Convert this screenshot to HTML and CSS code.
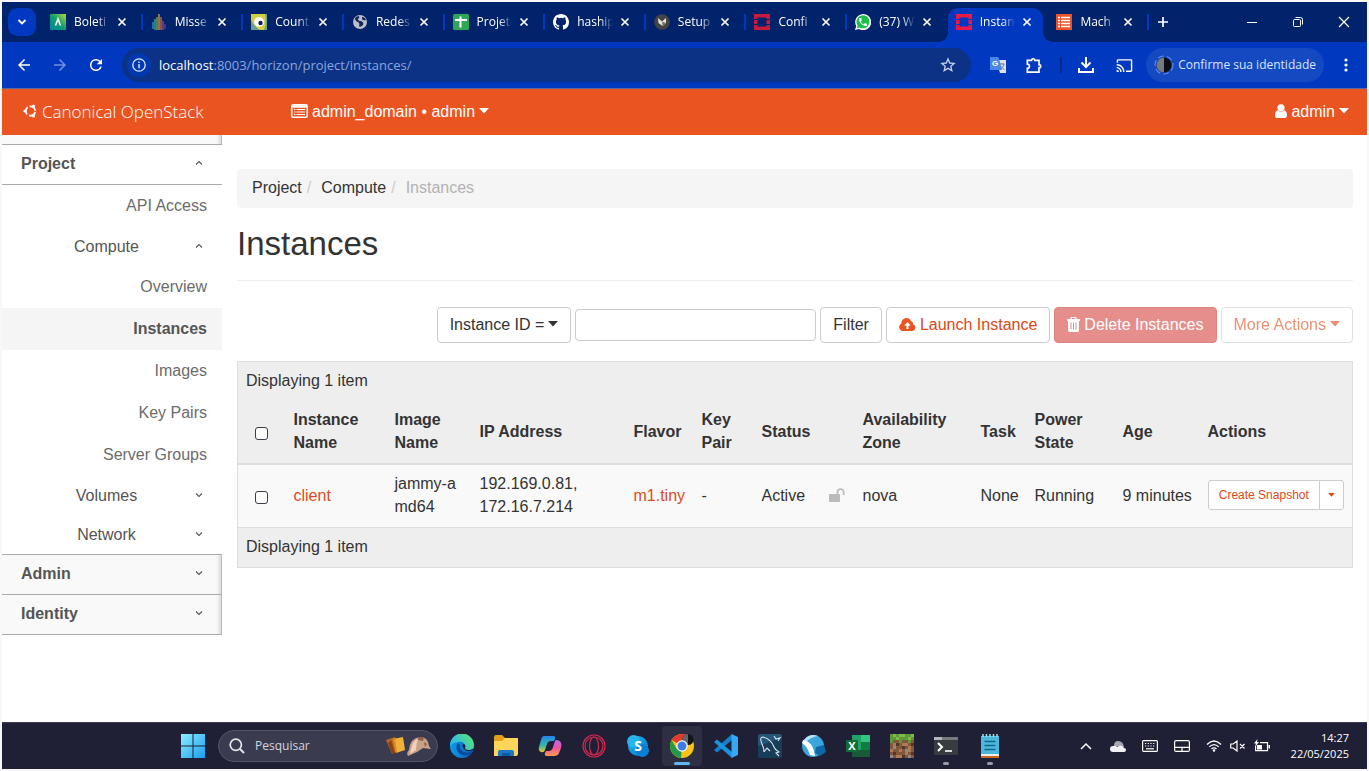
FILE: index.html
```html
<!DOCTYPE html>
<html lang="pt-BR">
<head>
<meta charset="utf-8">
<meta name="viewport" content="width=device-width, initial-scale=1">
<title>Instances - Canonical OpenStack</title>
<link rel="stylesheet" href="styles.css">
</head>
<body>
<svg class="defs" aria-hidden="true">
  <defs>
    <symbol id="x" viewBox="0 0 10 10"><path d="M1.500 1.500l7 7M8.500 1.500l-7 7" fill="none" stroke="#fff" stroke-width="1.700"/></symbol>
    <symbol id="openstack" viewBox="0 0 16 16"><path fill="currentColor" d="M0 0h16v5h-3.500V3.500h-9V5H0zM0 6h3.500v4H0zM12.500 6H16v4h-3.500zM0 11h3.500v1.500h9V11H16v5H0z"/></symbol>
    <symbol id="up" viewBox="0 0 8 6"><path d="M1 4.500L4 1.500l3 3" fill="none" stroke="#555" stroke-width="1.100"/></symbol>
    <symbol id="down" viewBox="0 0 8 6"><path d="M1 1.500l3 3 3-3" fill="none" stroke="#555" stroke-width="1.100"/></symbol>
    <symbol id="caret" viewBox="0 0 10 6"><path d="M0 0h10L5 5.500z" fill="currentColor"/></symbol>
    <linearGradient id="gw" x2="1" y2="1"><stop offset="0" stop-color="#8cefff"/><stop offset="1" stop-color="#189cf0"/></linearGradient>
    <linearGradient id="gb" x2="1"><stop offset="0" stop-color="#0e9ae8"/><stop offset="1" stop-color="#0b5cc0"/></linearGradient>
    <linearGradient id="ge" x2="1" y1="0.500"><stop offset="0" stop-color="#2ab6f0"/><stop offset="1" stop-color="#5fe86a"/></linearGradient>
    <linearGradient id="gc1" x2="0" y2="1"><stop offset="0" stop-color="#2286ee"/><stop offset="0.600" stop-color="#35b9a0"/><stop offset="1" stop-color="#f2c62b"/></linearGradient>
    <linearGradient id="gc2" x2="0" y2="1"><stop offset="0" stop-color="#b46af0"/><stop offset="0.500" stop-color="#f0559c"/><stop offset="1" stop-color="#ff9b55"/></linearGradient>
    <linearGradient id="gs" x2="1" y2="1"><stop offset="0" stop-color="#29b6ee"/><stop offset="1" stop-color="#0078cc"/></linearGradient>
    <linearGradient id="gt" x2="1" y2="1"><stop offset="0" stop-color="#0a7fa0"/><stop offset="0.500" stop-color="#0d9f6e"/><stop offset="1" stop-color="#b8d532"/></linearGradient>
  </defs>
</svg>
<div class="screen">
  <div class="tabstrip">
    <button class="tab-search" aria-label="Pesquisar guias"><svg width="10" height="8" viewBox="0 0 10 8"><path d="M1.500 2l3.500 3.500L8.500 2" fill="none" stroke="#fff" stroke-width="1.800"/></svg></button>
    <ul class="tabs">
      <li class="tab"><div class="face"><svg class="fav" viewBox="0 0 16 16"><path fill="url(#gt)" transform="matrix(1 0 0 -1 0 16)" d="M0 0h16v16H0z"/><path d="M5.500 11.500L8 5l2.500 6.500" fill="none" stroke="#fff" stroke-width="1.600"/></svg><span class="title">Boleti</span><button class="close" aria-label="Fechar"><svg><use href="#x"/></svg></button></div><i class="sep"></i></li>
      <li class="tab"><div class="face"><svg class="fav" viewBox="0 0 16 16"><g stroke-width="1.200"><path d="M2 8v7" stroke="#35a6dd"/><path d="M4 5v11" stroke="#3cbf9f"/><path d="M6 3v13" stroke="#8abb50"/><path d="M8 0v16" stroke="#e6b02e"/><path d="M10 3v13" stroke="#e8713c"/><path d="M12 7v9" stroke="#a24b7d"/><path d="M14 10v5" stroke="#6549a0"/></g></svg><span class="title">Misse</span><button class="close" aria-label="Fechar"><svg><use href="#x"/></svg></button></div><i class="sep"></i></li>
      <li class="tab"><div class="face"><svg class="fav" viewBox="0 0 16 16"><path fill="#d3cf3c" d="M0 0h16v16H0z"/><path fill="#6aa09a" d="M0 6q3 6 9 10H0zM14 0h2v16h-3q3-8 1-16z"/><circle cx="8" cy="8" r="5" fill="#fff"/><circle cx="9.500" cy="9" r="2.200" fill="#10206a"/></svg><span class="title">Count</span><button class="close" aria-label="Fechar"><svg><use href="#x"/></svg></button></div><i class="sep"></i></li>
      <li class="tab"><div class="face"><svg class="fav" viewBox="0 0 16 16"><circle cx="8" cy="8" r="7" fill="#b9bec9"/><path fill="#15265b" d="M3 4q2-2 4-2 1 2-1 3 0 2 3 2 3 1 2 4-3 3-4 1 1-3-1-4-3-1-3-4zM10 3q3 0 4 3-3 1-4-1z"/></svg><span class="title">Redes</span><button class="close" aria-label="Fechar"><svg><use href="#x"/></svg></button></div><i class="sep"></i></li>
      <li class="tab"><div class="face"><svg class="fav" viewBox="0 0 16 16"><rect width="16" height="16" rx="1.500" fill="#2fa656"/><path d="M2 6h12M7.500 2.500v11" stroke="#fff" stroke-width="2"/></svg><span class="title">Projet</span><button class="close" aria-label="Fechar"><svg><use href="#x"/></svg></button></div><i class="sep"></i></li>
      <li class="tab"><div class="face"><svg class="fav" viewBox="0 0 16 16"><path fill="#fff" d="M8 0C3.580 0 0 3.580 0 8c0 3.540 2.290 6.530 5.470 7.590.4.070.55-.17.55-.38 0-.19-.01-.82-.01-1.490-2.010.37-2.530-.49-2.690-.94-.09-.23-.48-.94-.82-1.130-.28-.15-.68-.52-.01-.53.63-.01 1.080.58 1.230.82.72 1.210 1.870.87 2.330.66.07-.52.28-.87.51-1.070-1.780-.2-3.640-.89-3.640-3.950 0-.87.31-1.590.82-2.150-.08-.2-.36-1.020.08-2.120 0 0 .67-.21 2.200.82a7.600 7.600 0 0 1 4 0c1.530-1.040 2.200-.82 2.200-.82.44 1.100.16 1.920.08 2.120.51.56.82 1.270.82 2.150 0 3.070-1.870 3.750-3.650 3.950.29.25.54.73.54 1.480 0 1.070-.01 1.930-.01 2.200 0 .21.15.46.55.38A8 8 0 0 0 16 8c0-4.420-3.580-8-8-8z"/></svg><span class="title">haship</span><button class="close" aria-label="Fechar"><svg><use href="#x"/></svg></button></div><i class="sep"></i></li>
      <li class="tab"><div class="face"><svg class="fav" viewBox="0 0 16 16"><circle cx="8" cy="8" r="7.800" fill="#444447"/><path fill="#e8e4dc" d="M4 4l4 3.500L12 4v5l-3.500 3L4.500 9z"/><path fill="#77726a" d="M8 7.500L12 9l-3.500 3z"/></svg><span class="title">Setup</span><button class="close" aria-label="Fechar"><svg><use href="#x"/></svg></button></div><i class="sep"></i></li>
      <li class="tab"><div class="face"><svg class="fav os-dim"><use href="#openstack"/></svg><span class="title">Confi</span><button class="close" aria-label="Fechar"><svg><use href="#x"/></svg></button></div><i class="sep"></i></li>
      <li class="tab"><div class="face"><svg class="fav" viewBox="0 0 24 24"><path fill="#fff" d="M0 24l1.800-6A12 12 0 1 1 6 22.400z"/><path fill="#1fbf4c" d="M2.600 21.400l1.200-4.200A9.800 9.800 0 1 1 7 20.200z"/><path fill="#fff" transform="translate(4 4) scale(.67)" d="M6.620 10.790c1.440 2.830 3.760 5.140 6.590 6.590l2.200-2.200c.27-.27.67-.36 1.020-.24 1.120.37 2.330.57 3.570.57.55 0 1 .45 1 1V20c0 .55-.45 1-1 1-9.390 0-17-7.610-17-17 0-.55.45-1 1-1h3.500c.55 0 1 .45 1 1 0 1.250.2 2.450.57 3.570.11.35.03.74-.25 1.020z"/></svg><span class="title">(37) W</span><button class="close" aria-label="Fechar"><svg><use href="#x"/></svg></button></div><i class="sep none"></i></li>
      <li class="tab active"><div class="face"><svg class="fav os"><use href="#openstack"/></svg><span class="title">Instan</span><button class="close" aria-label="Fechar"><svg><use href="#x"/></svg></button></div><i class="sep none"></i></li>
      <li class="tab"><div class="face"><svg class="fav" viewBox="0 0 16 16"><path fill="#e9542a" d="M0 0h16v16H0z"/><path d="M2 3.500h2m1 0h9M2 6.500h2m1 0h9M2 9.500h2m1 0h9M2 12.500h2m1 0h9" stroke="#fff" stroke-width="1.300"/></svg><span class="title">Mach</span><button class="close" aria-label="Fechar"><svg><use href="#x"/></svg></button></div><i class="sep"></i></li>
    </ul>
    <button class="new-tab" aria-label="Nova guia"><svg width="12" height="12" viewBox="0 0 12 12"><path d="M6 1v10M1 6h10" stroke="#fff" stroke-width="1.700"/></svg></button>
    <div class="win-controls">
      <button aria-label="Minimizar"><svg width="12" height="12" viewBox="0 0 12 12"><path d="M1 6.500h10" stroke="#fff"/></svg></button>
      <button aria-label="Restaurar"><svg width="12" height="12" viewBox="0 0 12 12" fill="none" stroke="#fff"><rect x="1.500" y="3.500" width="7" height="7" rx="1"/><path d="M3.500 1.500h5q2 0 2 2v5"/></svg></button>
      <button aria-label="Fechar janela"><svg width="12" height="12" viewBox="0 0 12 12"><path d="M1 1l10 10M11 1L1 11" stroke="#fff" stroke-width="1.200"/></svg></button>
    </div>
  </div>

  <div class="toolbar">
    <button class="tool" aria-label="Voltar"><svg width="18" height="18" viewBox="0 0 24 24"><path fill="#fff" d="M20 11H7.830l5.590-5.590L12 4l-8 8 8 8 1.410-1.410L7.830 13H20z"/></svg></button>
    <button class="tool" aria-label="Avançar"><svg width="18" height="18" viewBox="0 0 24 24"><path fill="#6f93e3" d="M4 11h12.170l-5.590-5.590L12 4l8 8-8 8-1.410-1.410L16.170 13H4z"/></svg></button>
    <button class="tool" aria-label="Recarregar"><svg width="18" height="18" viewBox="0 0 24 24"><path fill="#fff" d="M17.650 6.350A7.960 7.960 0 0 0 12 4a8 8 0 1 0 7.730 10h-2.080A6 6 0 1 1 12 6c1.660 0 3.140.69 4.220 1.780L13 11h7V4z"/></svg></button>
    <div class="omnibox">
      <button class="site-info" aria-label="Informações do site"><svg width="14" height="14" viewBox="0 0 14 14"><circle cx="7" cy="7" r="6.200" fill="none" stroke="#dfe8ff" stroke-width="1.300"/><path d="M7 6v4.200M7 3.600v1.500" stroke="#dfe8ff" stroke-width="1.400"/></svg></button>
      <div class="url"><b>localhost</b>:8003/horizon/project/instances/</div>
      <button class="star" aria-label="Favoritos"><svg width="16" height="16" viewBox="0 0 24 24"><path d="M12 3l2.600 6 6.600.600-5 4.400 1.500 6.500L12 17l-5.700 3.500L7.800 14l-5-4.400 6.600-.600z" fill="none" stroke="#c3d0ee" stroke-width="2"/></svg></button>
    </div>
    <div class="extensions">
      <button class="tool" aria-label="Traduzir"><svg width="16" height="16" viewBox="0 0 16 16"><path fill="#dfe1e6" d="M6 3h10v13H10z"/><path d="M9.500 7h5M12 6v1M14 7q-1 4-3.500 5.500M10.500 9l4 4" fill="none" stroke="#72819b"/><path fill="#4a86e8" d="M0 0h8.500L12 13H0z"/><text x="2" y="9" class="g-letter">G</text></svg></button>
      <button class="tool" aria-label="Extensões"><svg width="20" height="20" viewBox="0 0 24 24"><path d="M4 6.500h5a2 2 0 0 1 4 0h5v5a2 2 0 0 1 0 4v5H4v-4.500a2.500 2.500 0 0 0 0-5z" fill="none" stroke="#fff" stroke-width="2"/></svg></button>
      <i class="tool-sep"></i>
      <button class="tool wide" aria-label="Downloads"><svg width="18" height="18" viewBox="0 0 18 18"><path d="M9 1v9M4.500 6.500L9 11l4.500-4.500M2 12v4h14v-4" fill="none" stroke="#fff" stroke-width="2"/></svg></button>
      <button class="tool" aria-label="Transmitir"><svg width="17" height="17" viewBox="0 0 24 24"><path fill="#fff" d="M21 3H3c-1.100 0-2 .9-2 2v3h2V5h18v14h-7v2h7c1.100 0 2-.9 2-2V5c0-1.100-.9-2-2-2zM1 18v3h3c0-1.660-1.340-3-3-3zm0-4v2c2.760 0 5 2.240 5 5h2c0-3.870-3.130-7-7-7zm0-4v2c4.970 0 9 4.030 9 9h2c0-6.080-4.930-11-11-11z"/></svg></button>
    </div>
    <button class="profile"><svg width="20" height="20" viewBox="0 0 20 20"><circle cx="10" cy="10" r="9" fill="none" stroke="#5b8af0" stroke-width="1.200" stroke-dasharray="6 3"/><circle cx="10" cy="10" r="7.500" fill="#0b0d12"/><path fill="#77797c" d="M10 2.500v15a7.500 7.500 0 0 1 0-15z"/></svg>Confirme sua identidade</button>
    <button class="menu-dots" aria-label="Menu"><svg width="4" height="16" viewBox="0 0 4 16" fill="#fff"><circle cx="2" cy="3" r="1.600"/><circle cx="2" cy="8" r="1.600"/><circle cx="2" cy="13" r="1.600"/></svg></button>
  </div>

  <header class="topbar">
    <a class="brand" href="#"><svg width="14" height="14" viewBox="0 0 14 14"><circle cx="7.500" cy="7" r="4.700" fill="none" stroke="#fff" stroke-width="1.800" stroke-dasharray="7.840 2" stroke-dashoffset="8.840"/><circle cx="1.900" cy="7" r="1.500" fill="#fff"/><circle cx="10.500" cy="1.900" r="1.500" fill="#fff"/><circle cx="10.500" cy="12.100" r="1.500" fill="#fff"/></svg>Canonical OpenStack</a>
    <button class="nav-btn"><svg width="17" height="14" viewBox="0 0 17 14"><rect x=".75" y=".75" width="15.500" height="12.500" rx="1.500" fill="none" stroke="#fff" stroke-width="1.500"/><path d="M1 2.500h15" stroke="#fff" stroke-width="2.500"/><path d="M3 5.500h1.500m1 0H14M3 8h1.500m1 0H14M3 10.500h1.500m1 0H14" stroke="#fff" stroke-width="1.200"/></svg>admin_domain • admin<svg class="caret"><use href="#caret"/></svg></button>
    <button class="nav-btn user"><svg width="12" height="14" viewBox="0 0 12 14"><circle cx="6" cy="3.800" r="3.600" fill="#fff"/><path fill="#fff" d="M2.600 6.200Q6 9.500 9.400 6.200 12 7 12 11.500 12 14 9.800 14H2.200Q0 14 0 11.500 0 7 2.600 6.200z"/></svg>admin<svg class="caret"><use href="#caret"/></svg></button>
  </header>

  <div class="page">
    <nav class="sidebar">
      <div class="stub"></div>
      <button class="panel open">Project<svg class="chev"><use href="#up"/></svg></button>
      <a class="leaf" href="#">API Access</a>
      <button class="group"><span>Compute</span><svg class="chev"><use href="#up"/></svg></button>
      <a class="leaf" href="#">Overview</a>
      <a class="leaf current" href="#">Instances</a>
      <a class="leaf" href="#">Images</a>
      <a class="leaf" href="#">Key Pairs</a>
      <a class="leaf" href="#">Server Groups</a>
      <button class="group"><span>Volumes</span><svg class="chev"><use href="#down"/></svg></button>
      <button class="group"><span>Network</span><svg class="chev"><use href="#down"/></svg></button>
      <button class="panel first">Admin<svg class="chev"><use href="#down"/></svg></button>
      <button class="panel">Identity<svg class="chev"><use href="#down"/></svg></button>
    </nav>
    <main>
      <ol class="breadcrumb"><li><a href="#">Project</a></li><li><a href="#">Compute</a></li><li>Instances</li></ol>
      <h1>Instances</h1>
      <div class="actions">
        <button class="btn">Instance ID =<svg class="caret"><use href="#caret"/></svg></button>
        <input class="filter-input" type="text" aria-label="Filter">
        <button class="btn">Filter</button>
        <button class="btn link"><svg width="17" height="13" viewBox="0 0 17 13"><path fill="#e95420" d="M4 13a4 4 0 0 1-1.600-7.600A5 5 0 0 1 12 3.200a2.600 2.600 0 0 1 2 3A3.500 3.500 0 0 1 13.500 13z"/><path fill="#fff" d="M8.500 4l3.300 3.500H9.600V11H7.400V7.500H5.200z"/></svg>Launch Instance</button>
        <button class="btn danger" disabled><svg width="13" height="15" viewBox="0 0 13 15"><path fill="#fff" d="M4 0h5l.8 2H13v2h-1v9q0 2-1.500 2h-8Q1 15 1 13V4H0V2h3.200zm.8 1.100L4.500 2h4l-.3-.9z"/><path d="M4 5.500v7M6.500 5.500v7M9 5.500v7" stroke="#e68e8b"/></svg>Delete Instances</button>
        <button class="btn link faded" disabled>More Actions<svg class="caret"><use href="#caret"/></svg></button>
      </div>
      <table>
        <colgroup><col class="c-check"><col class="c-name"><col class="c-image"><col class="c-ip"><col class="c-flavor"><col class="c-key"><col class="c-status"><col class="c-lock"><col class="c-zone"><col class="c-task"><col class="c-power"><col class="c-age"><col class="c-actions"></colgroup>
        <thead>
          <tr class="count"><td colspan="13">Displaying 1 item</td></tr>
          <tr><th class="check"><input type="checkbox" aria-label="Select all"></th><th>Instance Name</th><th>Image Name</th><th>IP Address</th><th>Flavor</th><th>Key Pair</th><th>Status</th><th></th><th>Availability Zone</th><th>Task</th><th>Power State</th><th>Age</th><th>Actions</th></tr>
        </thead>
        <tbody>
          <tr><td class="check"><input type="checkbox" aria-label="Select client"></td><td><a href="#">client</a></td><td class="break">jammy-amd64</td><td>192.169.0.81,<br>172.16.7.214</td><td><a href="#">m1.tiny</a></td><td>-</td><td>Active</td><td><svg width="16" height="14" viewBox="0 0 16 14"><rect y="6" width="11" height="8" rx="1" fill="#bbb"/><path d="M8.500 7V4.200a3.100 3.100 0 0 1 6.200 0V7" fill="none" stroke="#bbb" stroke-width="1.700"/></svg></td><td>nova</td><td>None</td><td>Running</td><td class="age">9 minutes</td><td><div class="split"><button>Create Snapshot</button><button class="more" aria-label="More"><svg class="caret"><use href="#caret"/></svg></button></div></td></tr>
        </tbody>
        <tfoot><tr class="count"><td colspan="13">Displaying 1 item</td></tr></tfoot>
      </table>
    </main>
  </div>

  <footer class="taskbar">
    <button class="app" aria-label="Iniciar"><svg width="24" height="24" viewBox="0 0 24 24" fill="url(#gw)"><path d="M0 0h11.500v11.500H0zM12.500 0H24v11.500H12.500zM0 12.500h11.500V24H0zM12.500 12.500H24V24H12.500z"/></svg></button>
    <label class="search"><svg width="16" height="16" viewBox="0 0 16 16"><circle cx="6.800" cy="6.800" r="5.600" fill="none" stroke="#e6e6ee" stroke-width="1.700"/><path d="M11 11l4 4" stroke="#e6e6ee" stroke-width="1.900"/></svg><input type="text" placeholder="Pesquisar" aria-label="Pesquisar"><svg width="46" height="20" viewBox="0 0 46 20"><path fill="#b8691f" d="M0 4l9-3 5 13-8 4z"/><path fill="#8a4315" d="M2 7l4 11 3-1L5 4z"/><path fill="#f0b13b" d="M7 3l10-2 2 13-9 3z"/><path fill="#d98f22" d="M7 3l3 14 1-1L9 2z"/><path fill="#c9a186" d="M23 14Q24 2 34 1q8 0 9 9l2 3-8-1-6 4-9 4q-2-3 1-6z"/><path fill="#eed2bd" d="M25 13Q27 4 32 3q-2 5-2 11l-6 4z"/><path fill="#8c6049" d="M32 1l6 0-1 4-5-1zM38 6l3 2-2 3z"/></svg></label>
    <div class="apps">
      <button class="app" aria-label="Edge"><svg width="24" height="24" viewBox="0 0 24 24"><circle cx="12" cy="12" r="12" fill="url(#gb)"/><path fill="url(#ge)" d="M0 12A12 12 0 0 1 24 11q0 6-6 6-4 0-4-2 2-2 1-4-2-4-7-3-6 1-8 4z"/><path fill="#0b4a9c" d="M8 9Q5 13 8 18q4 5 11 3 3-2 4-4-7 3-11 0-3-3-2-6z"/><path fill="#1f1f35" d="M14 15q-3-4 0-5 2 1 1 4 0 2 5 2 3-1 4-2-2 4-7 3-2 0-3-2z"/></svg></button>
      <button class="app" aria-label="Explorador"><svg width="24" height="24" viewBox="0 0 24 24"><path fill="#e0a01d" d="M0 3q0-2 2-2h6l3 3v5H0z"/><path fill="#ffd65a" d="M0 7h8l3-3h13v16q0 2-2 2H0z"/><path fill="#1b78c8" d="M4 22v-4q0-2 2-2h12q2 0 2 2v4z"/><path fill="#0c5ca5" d="M8 19h8v3H8z"/></svg></button>
      <button class="app" aria-label="Copilot"><svg width="24" height="24" viewBox="0 0 24 24"><path fill="url(#gc1)" d="M6 2h9q3 0 2 3l-1 2h-3q-3 0-4 3l-2 6q-1 3-4 2-3-1-2-5l2-7Q4 2 6 2z"/><path fill="url(#gc2)" d="M18 6q4 0 5 3 1 2 0 5l-2 5q-1 3-5 3H9q-3 0-2-3l1-2h3q3 0 4-4l2-6z"/></svg></button>
      <button class="app" aria-label="Opera"><svg width="24" height="24" viewBox="0 0 24 24" fill="none" stroke="#d5274f" stroke-width="1.200"><circle cx="12" cy="12" r="11"/><ellipse cx="12" cy="12" rx="4.500" ry="9"/><circle cx="12" cy="12" r="9"/></svg></button>
      <button class="app" aria-label="Skype"><svg width="24" height="24" viewBox="0 0 24 24"><circle cx="12" cy="12" r="10" fill="url(#gs)"/><circle cx="7.500" cy="7.500" r="6.500" fill="#27b4ee"/><circle cx="16.500" cy="16.500" r="6.500" fill="#0a80d2"/><text x="12" y="17" text-anchor="middle" class="s-letter">S</text></svg></button>
      <button class="app running" aria-label="Chrome"><svg width="24" height="24" viewBox="0 0 24 24"><circle cx="12" cy="12" r="12" fill="#fbc116"/><path fill="#e33b2e" d="M12 12L1.600 6A12 12 0 0 1 22.400 6H12z"/><path fill="#279847" d="M12 12l-1 12A12 12 0 0 1 1.600 6l5.200 9z"/><circle cx="18" cy="5.500" r="5.500" fill="#141519"/><path fill="#666" d="M18 0v11a5.500 5.500 0 0 1 0-11z"/><circle cx="12" cy="12" r="5.700" fill="#fff"/><circle cx="12" cy="12" r="4.500" fill="#3b7ded"/></svg></button>
      <button class="app" aria-label="VS Code"><svg width="24" height="24" viewBox="0 0 24 24"><path fill="#1480cc" d="M18 0v6L3 18.500 0 16z"/><path fill="#1b92e0" d="M0 8l3-2.500L18 18v6z"/><path fill="#35a9f3" d="M17.500 0L24 3v18l-6.500 3z"/></svg></button>
      <button class="app" aria-label="MySQL Workbench"><svg width="24" height="24" viewBox="0 0 24 24"><rect width="24" height="24" rx="2.500" fill="#245777"/><path fill="#173d59" d="M0 12L24 4v18q0 2-2 2H2q-2 0-2-2z"/><path d="M6 18Q6 14 4 10 1 3 5 3q8 2 11 10 1 3 5 5l-3 1 3 3M6 18l3-4 3 3M16 2l2 3 4-1-2 3" fill="none" stroke="#dbe9f1" stroke-width="1.100"/></svg></button>
      <button class="app" aria-label="Navegador"><svg width="24" height="24" viewBox="0 0 24 24"><circle cx="11" cy="12" r="11" fill="#3aa5dc"/><path fill="#b9e5f8" d="M2 6Q8-1 16 2 9 3 4 8z"/><path fill="#fff" d="M1 6q10 1 12 16l-5-1Q5 12 0 9z"/><path fill="#0e68a8" d="M14 13l8-2 2 7-6 4-5-3z"/></svg></button>
      <button class="app" aria-label="Excel"><svg width="24" height="24" viewBox="0 0 24 24"><path fill="#21a366" d="M6 1h18v22H6z"/><path fill="#33c481" d="M15 1h9v7h-9z"/><path fill="#107c41" d="M15 8h9v8h-9z"/><path fill="#185c37" d="M6 16h18v7H6z"/><rect y="6" width="12" height="12" rx="1" fill="#0f6d3a"/><text x="6" y="16" text-anchor="middle" class="x-letter">X</text></svg></button>
      <button class="app" aria-label="Minecraft"><svg width="24" height="24" viewBox="0 0 8 8" shape-rendering="crispEdges"><path fill="#82573b" d="M0 0h8v8H0z"/><path fill="#5f9a3a" d="M0 0h8v2H7v1H6V2H4v1H3V2H1v1H0z"/><path fill="#7dbb4a" d="M1 0h1v1H1zM3 0h2v1H3zM6 1h1v1H6zM2 1h1v1H2zM7 0h1v1H7z"/><path fill="#b07a55" d="M1 3h1v1H1zM4 3h2v1H4zM0 5h1v1H0zM3 5h1v1H3zM6 4h1v2H6zM2 7h2v1H2zM5 6h1v1H5z"/><path fill="#54362a" d="M2 3h1v1H2zM7 3h1v1H7zM4 4h1v1H4zM1 6h1v1H1zM4 7h1v1H4zM7 6h1v1H7z"/><path fill="#918984" d="M1 4h1v1H1zM5 5h1v1H5zM0 7h1v1H0zM6 7h1v1H6z"/></svg></button>
      <button class="app dot" aria-label="Terminal"><svg width="24" height="18" viewBox="0 0 24 18"><path fill="#383b3f" d="M0 0h24v18H0z"/><path fill="#b4b7bb" d="M0 0h8v3H0z"/><path fill="#777b80" d="M8 0h16v3H8z"/><path d="M4 6l4 4-4 4" fill="none" stroke="#fff" stroke-width="2"/><path d="M11 14h7" stroke="#fff" stroke-width="1.600"/></svg></button>
      <button class="app dot" aria-label="Bloco de notas"><svg width="18" height="24" viewBox="0 0 18 24"><path fill="#4cb9dc" d="M0 2h18v19H0z"/><path d="M2 0v3M5.500 0v3M9 0v3M12.500 0v3M16 0v3" stroke="#a3e4f5" stroke-width="1.500"/><path d="M3.500 7.500h11M3.500 11.500h11M3.500 15.500h11" stroke="#12658a" stroke-width="1.500"/><path fill="#f0f0ea" d="M0 20h18v2H0z"/><path fill="#c56a20" d="M0 22h18v2H0z"/></svg></button>
    </div>
    <div class="tray">
      <button aria-label="Ícones ocultos"><svg width="12" height="8" viewBox="0 0 12 8"><path d="M1 7l5-5 5 5" fill="none" stroke="#fff" stroke-width="1.500"/></svg></button>
      <button aria-label="OneDrive"><svg width="16" height="11" viewBox="0 0 16 11"><path fill="#a6a7b2" d="M4 5Q4 0 8 0q5 0 6 6z"/><path fill="#f1f1f5" d="M3 11a3 3 0 0 1 0-6q3-1 4 1 5-3 7 1a2 2 0 0 1 0 4z"/></svg></button>
      <button aria-label="Teclado"><svg width="16" height="12" viewBox="0 0 16 12"><rect x=".6" y=".6" width="14.800" height="10.800" rx="1" fill="none" stroke="#fff" stroke-width="1.200"/><path d="M3 3.500h10M3 6h10" stroke="#fff" stroke-width="1.200" stroke-dasharray="1.200 1.500"/><path d="M4 8.800h8" stroke="#fff" stroke-width="1.200"/></svg></button>
      <button aria-label="Touchpad"><svg width="16" height="12" viewBox="0 0 16 12"><path d="M.6 7.300h14.800M8 7v4" stroke="#fff" stroke-width="1.200"/><rect x=".6" y=".6" width="14.800" height="10.800" rx="1.500" fill="none" stroke="#fff" stroke-width="1.200"/></svg></button>
      <button class="status" aria-label="Rede, som e bateria"><svg width="16" height="12" viewBox="0 0 16 12"><path d="M1 4.500q7-7 14 0M3.300 6.900q4.700-4.600 9.400 0M5.500 9q2.500-2.300 5 0" fill="none" stroke="#fff" stroke-width="1.300"/><circle cx="8" cy="10.500" r="1.200" fill="#fff"/></svg><svg width="16" height="12" viewBox="0 0 16 12"><path d="M.7 4h2.500L7 1v10L3.200 8H.7zM10 4l4.500 4.500M14.500 4L10 8.500" fill="none" stroke="#fff" stroke-width="1.200"/></svg><svg width="17" height="14" viewBox="0 0 17 14"><path d="M6 3.600h7.500v8H1.600V7" fill="none" stroke="#fff" stroke-width="1.200"/><path fill="#fff" d="M14.500 6H16v3.500h-1.500zM3 6h5v4.500H3zM3.500 0L0 4.500h2L1 8l4-5H3z"/></svg></button>
      <div class="clock"><div>14:27</div><div>22/05/2025</div></div>
    </div>
  </footer>
</div>
</body>
</html>
```
FILE: styles.css
```css
* { box-sizing: border-box; }
body {
  margin: 0;
  padding: 2px;
  background: #f8f8f8;
  font: 16px/23px "Liberation Sans", Arial, sans-serif;
  color: #333;
}
button, input { font: inherit; color: inherit; }
button { border: 0; padding: 0; background: none; display: flex; align-items: center; justify-content: center; white-space: nowrap; }
a { color: inherit; text-decoration: none; }
ul, ol { list-style: none; margin: 0; padding: 0; }
svg { flex: none; }
.defs { position: absolute; width: 0; height: 0; }
.screen { display: flex; flex-direction: column; min-height: calc(100vh - 4px); background: #fff; }

/* Browser tabs */
.tabstrip { display: flex; align-items: center; height: 40px; background: #00236b; font: 12px/16px "Open Sans", "Noto Sans", sans-serif; color: #fff; }
.tab-search { width: 28px; height: 28px; margin: 0 6px; border-radius: 9px; background: #0039bf; }
.tabs { display: flex; flex: 0 1 1107px; min-width: 0; align-self: stretch; }
.tab { display: flex; flex: 1 1 0; min-width: 0; align-items: flex-end; }
.face { position: relative; display: flex; flex: 1; min-width: 0; height: 34px; align-items: center; padding: 0 8px 6px; border-radius: 10px 10px 0 0; }
.fav { width: 16px; height: 16px; margin-right: 8px; }
.os { color: #ee1846; }
.os-dim { color: #c71a3d; }
.title { flex: 1; min-width: 0; overflow: hidden; white-space: nowrap; -webkit-mask-image: linear-gradient(90deg, #000 60%, transparent 95%); mask-image: linear-gradient(90deg, #000 60%, transparent 95%); }
.close { width: 16px; height: 16px; margin-left: 2px; }
.close svg { width: 10px; height: 10px; }
.sep { width: 2px; height: 16px; margin: 0 0 12px 3px; background: #0039bf; }
.sep.none { background: none; }
.active .face { background: #0039bf; }
.active .face::before, .active .face::after { content: ""; position: absolute; bottom: 0; width: 10px; height: 10px; }
.active .face::before { right: 100%; background: radial-gradient(circle at 0 0, transparent 10px, #0039bf 10px); }
.active .face::after { left: 100%; background: radial-gradient(circle at 100% 0, transparent 10px, #0039bf 10px); }
.new-tab { width: 28px; height: 28px; }
.win-controls { display: flex; margin-left: auto; }
.win-controls button { width: 46px; height: 40px; }

/* Address bar */
.toolbar { display: flex; align-items: center; height: 47px; padding-left: 4px; background: #0039bf; border-bottom: 1px solid #5766a0; font: 12px/16px "Open Sans", "Noto Sans", sans-serif; color: #d9e4ff; }
.tool { width: 36px; height: 34px; }
.tool.wide { width: 40px; }
.omnibox { display: flex; flex: 1; min-width: 0; align-items: center; height: 34px; margin-left: 8px; padding: 0 5px; border-radius: 17px; background: #0b3285; font-size: 13px; }
.site-info { width: 24px; height: 24px; border-radius: 12px; background: #0039b0; }
.url { flex: 1; min-width: 0; margin-left: 8px; overflow: hidden; white-space: nowrap; color: #8ba6de; }
.url b { font-weight: 400; color: #fff; }
.star { width: 36px; height: 24px; }
.extensions { display: flex; align-items: center; margin-left: 9px; }
.tool-sep { width: 2px; height: 16px; margin: 0 4px 0 8px; background: #052a85; }
.g-letter { font: 700 8px "Liberation Sans", sans-serif; fill: #fff; }
.profile { height: 34px; margin-left: 4px; padding: 0 8px; gap: 4px; border-radius: 17px; background: #1549c2; }
.menu-dots { width: 43px; height: 34px; }

/* Horizon header */
.topbar { display: flex; align-items: center; height: 46px; padding: 0 18px 2px 21px; background: #e95420; color: #fff; }
.brand { display: flex; align-items: center; gap: 5px; width: 268px; font: 300 17px/23px "Open Sans", "Noto Sans", sans-serif; }
.nav-btn { gap: 4px; }
.user { margin-left: auto; }
.caret { width: 10px; height: 6px; }

.page { display: flex; flex: 1; align-items: flex-start; }

/* Sidebar */
.sidebar { display: flex; flex-direction: column; flex: none; width: 220px; color: #555; }
.stub, .panel { border-right: 1px solid #bbb; border-bottom: 1px solid #aaa; background: #f9f9f9; box-shadow: inset -4px 0 4px -3px #ccc; }
.stub { height: 10px; }
.panel { justify-content: space-between; height: 40px; padding: 0 18px 2px 19px; font-weight: 700; }
.panel.open { background: #fff; border-right: 0; padding-right: 19px; box-shadow: none; }
.panel.first { height: 41px; border-top: 1px solid #aaa; }
.chev { width: 8px; height: 6px; margin-bottom: 2px; }
.leaf { height: 42px; padding: 9px 15px 0 0; text-align: right; color: #6b6b6b; }
.current { background: #f5f5f5; font-weight: 700; color: #555; }
.group { height: 39px; padding: 0 19px 0 16px; }
.group span { flex: 1; text-align: center; }

/* Content */
main { flex: 1; min-width: 0; padding: 34px 14px 20px 15px; }
.breadcrumb { display: flex; height: 39px; padding: 7px 15px; border-radius: 4px; background: #f5f5f5; }
.breadcrumb li + li::before { content: "/"; padding: 0 10px 0 5px; color: #ccc; }
.breadcrumb li:last-child { color: #b3b3b3; }
h1 { margin: 17px 0 26px; padding-bottom: 18px; border-bottom: 1px solid #eee; font-size: 33px; line-height: 37px; font-weight: 400; }
.actions { display: flex; justify-content: flex-end; align-items: center; gap: 4px; }
.btn { height: 36px; padding: 0 12px 2px; gap: 4px; border: 1px solid #ccc; border-radius: 4px; background: #fff; }
.link { color: #dd4814; }
.danger { border-color: #dd8582; background: #e68e8b; color: #fff; }
.faded { opacity: 0.6; }
.filter-input { width: 241px; min-width: 0; height: 32px; padding: 0 8px; border: 1px solid #ccc; border-radius: 4px; background: #fff; }

table { width: 100%; margin-top: 18px; table-layout: fixed; border-collapse: collapse; border: 1px solid #ddd; }
.c-check { width: 48px; } .c-name { width: 101px; } .c-image { width: 85px; } .c-ip { width: 154px; }
.c-flavor { width: 68px; } .c-key { width: 60px; } .c-status { width: 67px; } .c-lock { width: 34px; }
.c-zone { width: 118px; } .c-task { width: 54px; } .c-power { width: 88px; } .c-age { width: 85px; } .c-actions { width: 153px; }
th, td { padding: 7px 8px 9px; text-align: left; vertical-align: middle; }
thead, tfoot { background: #eee; }
thead th { border-bottom: 2px solid #ddd; }
tbody { background: #f9f9f9; }
tfoot td { border-top: 1px solid #ddd; }
td a { color: #dd4b22; }
td svg { display: block; }
.break { word-break: break-all; }
.age { white-space: nowrap; }
.check { text-align: center; }
.check input { appearance: none; width: 13px; height: 13px; margin: 2px 0 0; border: 1px solid #3d3d48; border-radius: 3px; background: #fff; vertical-align: middle; }
.split { display: flex; }
.split button { flex: 1; height: 30px; border: 1px solid #ccc; border-radius: 3px 0 0 3px; background: #fff; font-size: 12px; color: #dd4814; }
.split .more { flex: 0 0 25px; margin-left: -1px; border-radius: 0 3px 3px 0; }
.split .caret { width: 7px; height: 4px; }

/* Taskbar */
.taskbar { display: flex; align-items: center; height: 47px; padding: 0 18px 0 169px; background: #1f1f35; border-top: 1px solid #3c3c4c; font: 12px/16px "Open Sans", "Noto Sans", sans-serif; color: #fff; }
.apps { display: flex; }
.app { position: relative; width: 44px; height: 40px; }
.s-letter { font: 700 14px "Open Sans", sans-serif; fill: #fff; }
.x-letter { font: 700 11px "Open Sans", sans-serif; fill: #fff; }
.search { display: flex; align-items: center; width: 220px; height: 32px; margin: 0 2px 0 3px; padding: 0 5px 0 10px; border: 1px solid #55556a; border-radius: 16px; background: #3b3b4f; }
.search input { flex: 1; min-width: 0; padding: 0 0 0 10px; border: 0; background: none; }
.search input::placeholder { color: #d5d5dd; opacity: 1; }
.running { width: 40px; margin: 0 2px; border-radius: 4px; background: #2f2f43; }
.running::after, .dot::after { content: ""; position: absolute; bottom: 1px; left: 50%; width: 16px; height: 3px; margin-left: -8px; border-radius: 2px; background: #5fb8f2; }
.dot::after { width: 6px; margin-left: -3px; background: #9b9baa; }
.tray { display: flex; align-items: center; margin-left: auto; }
.tray button { width: 32px; height: 40px; }
.tray .status { width: auto; gap: 8px; padding: 0 8px; }
.clock { margin-left: 12px; text-align: right; font-size: 11px; }
```
